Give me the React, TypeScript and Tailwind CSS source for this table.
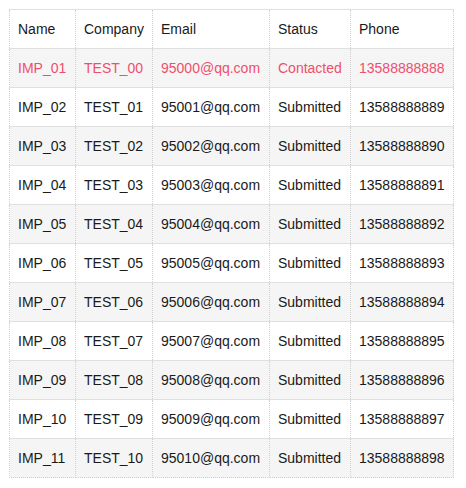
const columns = [
  { key: "name", label: "Name", width: "w-[66px]" },
  { key: "company", label: "Company", width: "w-[77px]" },
  { key: "email", label: "Email", width: "w-[117px]" },
  { key: "status", label: "Status", width: "w-[81px]" },
  { key: "phone", label: "Phone", width: "w-[103px]" },
] as const;

interface Row {
  name: string;
  company: string;
  email: string;
  status: string;
  phone: string;
}

const rows: Row[] = Array.from({ length: 11 }, (_, i) => ({
  name: `IMP_${String(i + 1).padStart(2, "0")}`,
  company: `TEST_${String(i).padStart(2, "0")}`,
  email: `950${String(i).padStart(2, "0")}@qq.com`,
  status: i === 0 ? "Contacted" : "Submitted",
  phone: `135888888${String(88 + i)}`,
}));

export default function App() {
  return (
    <div className="bg-white w-[466px] h-[488px] p-[9px] font-['Liberation_Sans',Arial,sans-serif] text-[14px] text-[#1a1a1a]">
      <table className="table-fixed border-collapse w-[444px]">
        <thead>
          <tr className="h-[39px]">
            {columns.map((c, ci) => (
              <th
                key={c.key}
                className={`${c.width} text-left font-normal pl-[8px] pr-0 border-t border-t-[#e0e0e0] border-b border-b-[#e0e0e0] border-r border-r-[#d0d0d0] border-dotted ${
                  ci === 0 ? "border-l border-l-[#d0d0d0]" : ""
                } [border-top-style:solid] [border-bottom-style:solid]`}
              >
                {c.label}
              </th>
            ))}
          </tr>
        </thead>
        <tbody>
          {rows.map((r, ri) => {
            const last = ri === rows.length - 1;
            return (
              <tr
                key={r.name}
                className={`h-[39px] ${ri % 2 === 0 ? "bg-[#f5f5f5]" : "bg-white"} ${
                  ri === 0 ? "text-[#ef4f6c]" : ""
                }`}
              >
                {columns.map((c, ci) => (
                  <td
                    key={c.key}
                    className={`pl-[8px] pr-0 whitespace-nowrap border-r border-r-[#d0d0d0] border-dotted border-b ${
                      last ? "border-b-[#d0d0d0]" : "border-b-[#e0e0e0] [border-bottom-style:solid]"
                    } ${ci === 0 ? "border-l border-l-[#d0d0d0]" : ""}`}
                  >
                    {r[c.key]}
                  </td>
                ))}
              </tr>
            );
          })}
        </tbody>
      </table>
    </div>
  );
}
